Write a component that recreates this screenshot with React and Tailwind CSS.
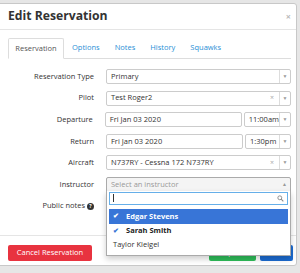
import React from "react";

const Arrow = ({ up }) => (
  <div className="flex w-[11px] items-center justify-center border-l border-[#ddd] self-stretch">
    <span className="text-[5px] leading-none text-[#999]">{up ? "▲" : "▼"}</span>
  </div>
);

const Row = ({ label, children, extra }) => (
  <div className="flex items-center h-[15px] mb-[6.6px]">
    <div className="w-[86px] text-right text-[7.5px] text-[#333] flex items-center justify-end gap-[2px]">
      {label}
      {extra}
    </div>
    <div className="ml-[12px] flex-1 flex h-full gap-[2px]">{children}</div>
  </div>
);

const Box = ({ children, className = "" }) => (
  <div className={"flex h-full items-center rounded-[2px] border border-[#ccc] bg-white text-[7.5px] text-[#333] " + className}>
    {children}
  </div>
);

export default function App() {
  return (
    <div className="w-[300px] h-[273px] bg-[#e6e6e6] overflow-hidden relative" style={{ fontFamily: '"Open Sans", sans-serif' }}>
      <div className="absolute left-[-4px] top-[3px] w-[301px] h-[263px] bg-white border border-[#c8c8c8] rounded-[3px] flex flex-col">
        {/* header */}
        <div className="h-[26px] border-b border-[#e5e5e5] flex items-center justify-between pl-[11px] pr-[5px]">
          <div className="text-[12.2px] font-bold text-[#333] leading-none">Edit Reservation</div>
          <div className="text-[9px] text-[#bbb] font-bold leading-none">×</div>
        </div>
        {/* body */}
        <div className="flex-1 relative pl-[11px] pr-[5px] pt-[8px]">
          <div className="flex h-[21px] border-b border-[#ddd] text-[7.5px]">
            <div className="w-[56px] h-[21px] border border-[#ddd] border-b-white rounded-t-[2px] bg-white flex items-center justify-center text-[#555]">Reservation</div>
            <div className="ml-[8px] flex items-center text-[#2a8fd6]">Options</div>
            <div className="ml-[15px] flex items-center text-[#2a8fd6]">Notes</div>
            <div className="ml-[15px] flex items-center text-[#2a8fd6]">History</div>
            <div className="ml-[15px] flex items-center text-[#2a8fd6]">Squawks</div>
          </div>
          <div className="pt-[10px]">
            <Row label="Reservation Type">
              <Box className="flex-1 pl-[4px]">
                <span className="flex-1">Primary</span>
                <Arrow />
              </Box>
            </Row>
            <Row label="Pilot">
              <Box className="flex-1 pl-[4px]">
                <span className="flex-1">Test Roger2</span>
                <span className="text-[7px] text-[#aaa] mr-[5px]">×</span>
                <Arrow />
              </Box>
            </Row>
            <Row label="Departure">
              <Box className="w-[137px] pl-[4px]">Fri Jan 03 2020</Box>
              <Box className="flex-1 pl-[4px]">
                <span className="flex-1">11:00am</span>
                <Arrow />
              </Box>
            </Row>
            <Row label="Return">
              <Box className="w-[137px] pl-[4px]">Fri Jan 03 2020</Box>
              <Box className="flex-1 pl-[4px]">
                <span className="flex-1">1:30pm</span>
                <Arrow />
              </Box>
            </Row>
            <Row label="Aircraft">
              <Box className="flex-1 pl-[4px]">
                <span className="flex-1">N737RY - Cessna 172 N737RY</span>
                <span className="text-[7px] text-[#aaa] mr-[5px]">×</span>
                <Arrow />
              </Box>
            </Row>
            <Row label="Instructor">
              <div className="flex-1 relative">
                <div className="flex h-[15px] items-center rounded-t-[2px] border border-[#aaa] bg-[#f4f4f4] text-[7.5px] text-[#999] pl-[4px]">
                  <span className="flex-1">Select an instructor</span>
                  <div className="w-[11px] flex justify-center"><span className="text-[5px] text-[#999]">▲</span></div>
                </div>
                <div className="absolute left-0 right-0 top-[14px] z-10 bg-white border border-[#aaa] border-t-0 shadow-[0_3px_6px_rgba(0,0,0,0.2)] px-[2px] pt-[1px] pb-[3px]">
                  <div className="h-[13px] border border-[#66afe9] flex items-center pl-[3px] pr-[3px]">
                    <div className="w-[0.5px] h-[8px] bg-[#333]"></div>
                    <div className="flex-1"></div>
                    <svg width="7" height="7" viewBox="0 0 10 10">
                      <circle cx="4" cy="4" r="2.8" fill="none" stroke="#888" strokeWidth="1.3" />
                      <line x1="6" y1="6" x2="9" y2="9" stroke="#888" strokeWidth="1.5" />
                    </svg>
                  </div>
                  <div className="mt-[4px] h-[15px] bg-[#3875d7] flex items-center text-white text-[7.5px] font-bold pl-[4px]">
                    <span className="w-[13px] text-[7px]">✔</span>Edgar Stevens
                  </div>
                  <div className="h-[14px] flex items-center text-[#222] text-[7.5px] font-bold pl-[4px]">
                    <span className="w-[13px] text-[7px] text-[#3875d7]">✔</span>Sarah Smith
                  </div>
                  <div className="h-[14px] flex items-center text-[#333] text-[7.5px] pl-[4px]">Taylor Kleigel</div>
                </div>
              </div>
            </Row>
            <Row
              label="Public notes"
              extra={
                <span className="inline-flex w-[7px] h-[7px] rounded-full bg-[#333] text-white text-[5px] font-bold items-center justify-center leading-none">?</span>
              }
            >
              <div />
            </Row>
          </div>
        </div>
        {/* footer */}
        <div className="h-[30px] border-t border-[#e5e5e5] flex items-end justify-between pl-[11px] pr-[3px] pb-[4px]">
          <div className="h-[16px] w-[84px] rounded-[2px] bg-[#e8333f] text-white text-[7.5px] flex items-center justify-center">Cancel Reservation</div>
          <div className="flex gap-[4px]">
            <div className="h-[16px] w-[47px] rounded-[2px] bg-[#2ebd59] text-white text-[7.5px] flex items-center justify-center">Dispatch</div>
            <div className="h-[16px] w-[33px] rounded-[2px] bg-[#1b6bd1] text-white text-[7.5px] flex items-center justify-center">Save</div>
          </div>
        </div>
      </div>
    </div>
  );
}
